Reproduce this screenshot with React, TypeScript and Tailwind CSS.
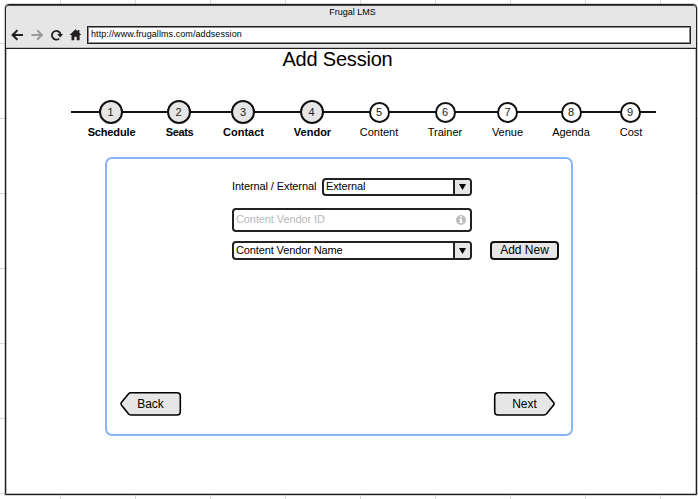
import React from "react";

type Step = { label: string; width: string; done?: boolean; spacing?: string };

const steps: Step[] = [
  { label: "Schedule", width: "w-[69px]", done: true, spacing: "tracking-[-0.15px] left-[1px]" },
  { label: "Seats", width: "w-[67px]", done: true, spacing: "tracking-[-0.35px] left-[1px]" },
  { label: "Contact", width: "w-[62px]", done: true, spacing: "left-[0.5px]" },
  { label: "Vendor", width: "w-[75px]", done: true, spacing: "left-[1px]" },
  { label: "Content", width: "w-[60px]" },
  { label: "Trainer", width: "w-[72px]" },
  { label: "Venue", width: "w-[53px]" },
  { label: "Agenda", width: "w-[74px]", spacing: "tracking-[-0.1px]" },
  { label: "Cost", width: "w-[44px]", spacing: "left-[1px]" },
];

function Toolbar() {
  return (
    <svg className="mt-[2px] ml-[4px] h-[14px] w-[74px] shrink-0" viewBox="0 0 74 14">
      <g fill="none" strokeWidth="2">
        <path d="M13 7H2.5M7.4 2.2 2.6 7l4.8 4.8" stroke="#231f20" />
        <path d="M21.5 7H32M27.1 2.2 31.9 7l-4.8 4.8" stroke="#999" />
        <path d="M49.2 10.6A4.4 4.4 0 1 1 50.6 6.2" stroke="#231f20" strokeWidth="1.8" />
      </g>
      <path d="M47.2 6h5.9L50.2 9.6z" fill="#231f20" />
      <path d="M65.5 1.3 59.6 7h1.9v5.3h2.8V8.8h2.4v3.5h2.9V7h1.8l-2-2V2h-1.7v1.3z" fill="#231f20" />
    </svg>
  );
}

function Stepper() {
  return (
    <div className="relative mt-[29px] ml-[65px] h-[40px] w-[585px] shrink-0">
      <div className="absolute top-[11px] left-0 h-[2px] w-full bg-[#111]" />
      <ol className="relative flex pl-[5px]">
        {steps.map((s, i) => (
          <li key={s.label} className={`flex shrink-0 flex-col items-center ${s.width}`}>
            <div className="flex h-[24px] items-center">
              <div
                className={`flex items-center justify-center rounded-full border-2 border-[#111] text-[11px] leading-none text-[#222] ${
                  s.done ? "size-[24px] bg-[#e6e6e6]" : "size-[21px] bg-white"
                }`}
              >
                {i + 1}
              </div>
            </div>
            <span
              className={`relative mt-[2px] text-[11px] leading-[13px] whitespace-nowrap ${s.done ? "font-bold" : ""} ${s.spacing ?? ""}`}
            >
              {s.label}
            </span>
          </li>
        ))}
      </ol>
    </div>
  );
}

function Select({ value, className }: { value: string; className: string }) {
  return (
    <div className={`flex shrink-0 overflow-hidden rounded-[4px] border-2 border-[#222] bg-white ${className}`}>
      <span className="flex grow items-center pb-[1px] pl-[2px] text-[11px] leading-none tracking-[-0.12px] whitespace-nowrap">
        {value}
      </span>
      <span className="flex w-[17px] shrink-0 items-center justify-center border-l-2 border-[#222] bg-[#e6e6e6]">
        <svg className="h-[6px] w-[7px]" viewBox="0 0 7 6">
          <path d="M0 0h7L3.5 6z" />
        </svg>
      </span>
    </div>
  );
}

function Arrow({ label, back }: { label: string; back?: boolean }) {
  return (
    <button className="relative flex h-[25px] w-[63px] items-center justify-center text-[12px] leading-none">
      <svg className="absolute inset-0 h-[25px] w-[63px]" viewBox="0 0 63 25">
        <path
          d="M5 1.7H51Q52.6 1.7 53.6 2.9L60.6 11.6Q61.5 12.8 60.6 14L53.6 22.8Q52.6 24 51 24H5Q1.7 24 1.7 20.7V5Q1.7 1.7 5 1.7Z"
          transform={back ? "matrix(-1 0 0 1 63 0)" : undefined}
          fill="#e6e6e6"
          stroke="#000"
          strokeWidth="1.6"
        />
      </svg>
      <span className="relative">{label}</span>
    </button>
  );
}

export default function App() {
  return (
    <div className="h-[499px] w-[698px] overflow-hidden bg-white bg-[linear-gradient(to_right,#d8d8d8_1px,transparent_1px),linear-gradient(to_bottom,#d8d8d8_1px,transparent_1px)] bg-[size:75px_75px] bg-[position:60px_43px] pt-[4px] pl-[5px] font-['Liberation_Sans',Arial,sans-serif] text-black">
      <div className="flex h-[491px] w-[692px] flex-col rounded-t-[4px] border border-[#231f20] bg-white shadow-[0_0_0_0.6px_#aaa,inset_0_0_0_1px_#bbb]">
        <header className="flex h-[44px] shrink-0 flex-col rounded-t-[3px] border-b border-[#231f20] bg-[#e6e6e6] shadow-[inset_0_1px_0_#4d4648,inset_0_-1px_0_#bbb]">
          <div className="h-[21px] pt-[1px] pl-[3px] text-center text-[9px] leading-[12px]">Frugal LMS</div>
          <div className="flex h-[18px]">
            <Toolbar />
            <div className="ml-[3px] flex w-[604px] shrink-0 items-center border border-[#231f20] bg-white pb-[2px] pl-[3px] text-[9px] leading-none tracking-[0.08px] shadow-[inset_0_0_0_1px_#8a8a8a]">
              http://www.frugallms.com/addsession
            </div>
          </div>
        </header>
        <h1 className="mr-[27px] h-[22px] shrink-0 text-center text-[20px] leading-[20px] tracking-[-0.2px]">
          Add Session
        </h1>
        <Stepper />
        <main className="mt-[17px] ml-[99px] flex h-[279px] w-[468px] shrink-0 flex-col rounded-[7px] border-2 border-[#8ab4f8] bg-white">
          <div className="mt-[19px] ml-[125px] flex h-[18px] items-center">
            <label className="w-[90px] pb-[2px] text-[11px] leading-none tracking-[-0.1px] whitespace-nowrap">
              Internal / External
            </label>
            <Select value="External" className="h-[18px] w-[150px]" />
          </div>
          <div className="mt-[12px] ml-[125px] flex h-[24px] w-[240px] items-center justify-between rounded-[4px] border-2 border-[#222] bg-white pr-[4px] pl-[2px] text-[11px] leading-none tracking-[-0.1px] text-[#b8b8b8]">
            <span className="pb-[2px]">Content Vendor ID</span>
            <svg className="size-[10px]" viewBox="0 0 10 10">
              <circle cx="5" cy="5" r="5" fill="#bdbdbd" />
              <path d="M4 1.3h2v1.5H4zM3.3 3.8H6v3.3h.8v1H3.3v-1h.8V4.8h-.8z" fill="#fff" />
            </svg>
          </div>
          <div className="mt-[9px] ml-[125px] flex h-[19px] gap-[18px]">
            <Select value="Content Vendor Name" className="h-[19px] w-[240px]" />
            <button className="h-[19px] w-[69px] rounded-[4px] border-2 border-[#111] bg-[#e6e6e6] pb-[1px] text-[12px] leading-[14px]">
              Add New
            </button>
          </div>
          <div className="mt-[131px] flex justify-between pr-[15px] pl-[12px]">
            <Arrow label="Back" back />
            <Arrow label="Next" />
          </div>
        </main>
      </div>
    </div>
  );
}
